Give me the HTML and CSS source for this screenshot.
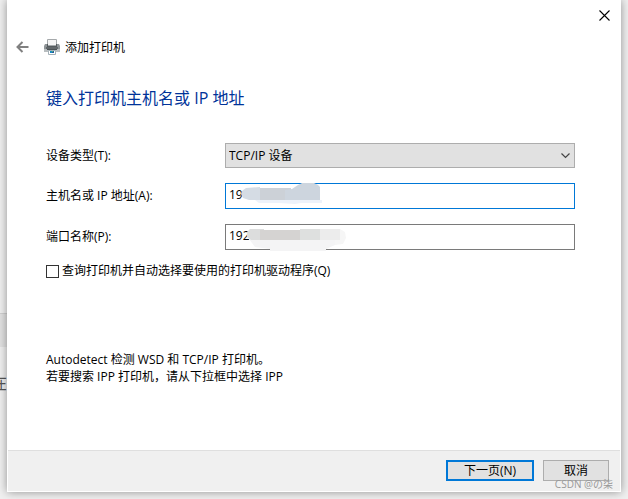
FILE: index.html
```html
<!DOCTYPE html>
<html lang="zh-CN">
<head>
<meta charset="utf-8">
<title>添加打印机</title>
<link rel="stylesheet" href="styles.css">
</head>
<body>
<div class="backdrop" aria-hidden="true"><div class="backdrop-bar"></div><span class="backdrop-text">在</span></div>
<main class="dialog">
  <div class="titlebar">
    <button class="icon-button" type="button" aria-label="关闭">
      <svg width="11" height="11" viewBox="0 0 11 11"><path d="M.5.5l10 10M10.500.5l-10 10" stroke="#000" stroke-width="1.100" fill="none"/></svg>
    </button>
  </div>
  <header class="header">
    <button class="icon-button" type="button" aria-label="返回">
      <svg width="13" height="12" viewBox="0 0 13 12"><path d="M12.500 6H1.500M6.500 1L1.500 6l5 5" stroke="#808080" stroke-width="2" fill="none"/></svg>
    </button>
    <svg class="printer" width="16" height="16" viewBox="0 0 16 16">
      <path d="M3.500.5h9v6h-9z" fill="#f4f4f4" stroke="#a5a9ab"/>
      <path d="M1 5h2v2h10V5h2l1 2v6H0V7z" fill="#8e9497"/>
      <path d="M3 5h1v2h8V5h1v3H3z" fill="#555b5e"/>
      <path d="M2 8h12v2H2z" fill="#606669"/>
      <path d="M0 10h16v3H0z" fill="#b9bec0"/>
      <path d="M3 10h10v1H3z" fill="#4b5255"/>
      <path d="M4.500 11.500h7v4h-7z" fill="#fff" stroke="#a4b1b8"/>
      <path d="M6 12h2v2H6z" fill="#168bc4"/><path d="M8 12h2v2H8z" fill="#245a9c"/><path d="M8 12h1v1H8z" fill="#55b66a"/>
    </svg>
    <span>添加打印机</span>
  </header>
  <form class="content">
    <h1>键入打印机主机名或 IP 地址</h1>
    <div class="fields">
      <label for="type">设备类型(T):</label>
      <div class="control">
        <select id="type"><option>TCP/IP 设备</option></select>
        <svg class="chevron" width="9" height="6" viewBox="0 0 9 6"><path d="M.5.5l4 4 4-4" stroke="#444" stroke-width="1.200" fill="none"/></svg>
      </div>
      <label for="host">主机名或 IP 地址(A):</label>
      <div class="control">
        <input class="textbox focused" id="host" type="text" value="19">
        <svg class="smudge" width="126" height="27" viewBox="0 0 126 27">
          <path d="M30 17h67v3H76l-6 1-16-1H34z" fill="#edf2fa"/>
          <path d="M17 8l4-3 14-1v13H24l-6-2-2-4z" fill="#d5dce4"/>
          <path d="M35 5h31v12H35z" fill="#ccd1d7"/>
          <path d="M60 7l7-1 6-4 4-2h12l4 2 2 2v13H60z" fill="#cdd5de"/>
        </svg>
      </div>
      <label for="port">端口名称(P):</label>
      <div class="control">
        <input class="textbox" id="port" type="text" value="192">
        <svg class="smudge" width="126" height="27" viewBox="0 0 126 27">
          <path d="M24 15h86v6l-9 4v2H45v-2l-15-2z" fill="#f4f4f5"/>
          <path d="M22 8l3-3h14v11H26l-4-3z" fill="#dcdddd"/>
          <path d="M35 6h40v10H35z" fill="#d5d3d2"/>
          <path d="M75 5h20v11H75z" fill="#dee0df"/>
          <path d="M95 5h20v11H95z" fill="#ececec"/>
          <path d="M115 5l5 3 1 6-3 6-8 1v-5h5z" fill="#f6f6f6"/>
        </svg>
      </div>
    </div>
    <label class="check"><input type="checkbox"><span>查询打印机并自动选择要使用的打印机驱动程序(Q)</span></label>
    <p class="hint">Autodetect 检测 WSD 和 TCP/IP 打印机。<br>若要搜索 IPP 打印机，请从下拉框中选择 IPP</p>
  </form>
  <footer class="footer">
    <button class="button primary" type="button">下一页(N)</button>
    <button class="button" type="button">取消</button>
    <span class="watermark">CSDN @の柒</span>
  </footer>
</main>
</body>
</html>
```
FILE: styles.css
```css
* { box-sizing: border-box; }
body {
  margin: 0;
  min-height: 100vh;
  display: flex;
  padding: 0 7px 7px;
  position: relative;
  overflow: hidden;
  background: #f0f0f0;
  color: #000;
  font: 12px/16px "Open Sans", "Noto Sans CJK SC", sans-serif;
}
button, input, select { font: inherit; color: inherit; border-radius: 0; }
.backdrop { position: absolute; top: 313px; left: 0; width: 7px; }
.backdrop-bar { height: 34px; background: #e2e2e2; border-top: 1px solid #d0d0d0; }
.backdrop-text {
  position: absolute;
  top: 60px;
  right: 0;
  font-size: 16px;
  line-height: 20px;
  color: #555;
}
.dialog {
  flex: 1;
  position: relative;
  display: flex;
  flex-direction: column;
  background: #fff;
  box-shadow: 0 0 9px rgba(0, 0, 0, .4);
}
.icon-button { display: flex; padding: 0; border: 0; background: none; }
.titlebar { display: flex; justify-content: flex-end; padding: 10px 11px 0 0; }
.header {
  display: flex;
  align-items: center;
  margin-top: 17px;
  padding-left: 9px;
}
.header span { padding-top: 2px; }
.printer { margin: 0 5px 0 15px; }
.content { flex: 1; padding: 30px 46px 0 39px; }
h1 {
  margin: 0;
  font-size: 16px;
  line-height: 24px;
  font-weight: 400;
  color: #003399;
}
.fields {
  display: grid;
  grid-template-columns: 179px 1fr;
  gap: 15px 0;
  align-items: center;
  margin-top: 33px;
}
.control { position: relative; display: flex; }
select, .textbox {
  flex: 1;
  min-width: 0;
  height: 26px;
  margin: 0;
  padding: 0 3px 4px;
  outline: 0;
}
select {
  height: 25px;
  padding-bottom: 0;
  appearance: none;
  border: 1px solid #adadad;
  background: #e1e1e1;
}
.textbox { border: 1px solid #7a7a7a; background: #fff; }
.focused { border-color: #0078d7; }
.chevron { position: absolute; right: 5px; top: 10px; }
.smudge { position: absolute; left: 0; top: 0; pointer-events: none; }
.check { display: flex; align-items: center; gap: 3px; margin-top: 13px; }
.check input {
  appearance: none;
  width: 13px;
  height: 13px;
  margin: 0;
  border: 1px solid #333;
  background: #fff;
}
.hint { margin: 72px 0 0; line-height: 17px; }
.footer {
  position: relative;
  display: flex;
  justify-content: flex-end;
  gap: 9px;
  margin: 0 1px 1px;
  padding: 9px 11px 10px;
  background: #f0f0f0;
  border-top: 1px solid #dfdfdf;
}
.button {
  width: 66px;
  height: 21px;
  padding: 0;
  border: 1px solid #adadad;
  background: #e1e1e1;
  line-height: 16px;
}
.primary { width: 88px; border: 2px solid #0078d7; }
.watermark {
  position: absolute;
  right: 7px;
  bottom: 0;
  font-size: 10px;
  line-height: 14px;
  color: #999;
}
```
